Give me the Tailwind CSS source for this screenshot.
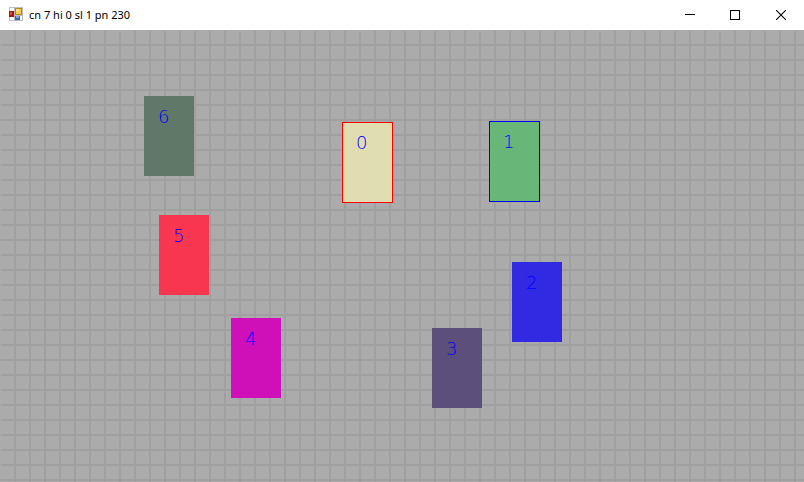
<!DOCTYPE html>
<html lang="en">
<head>
<meta charset="utf-8">
<title>cn 7 hi 0 sl 1 pn 230</title>
<script src="https://cdn.jsdelivr.net/npm/@tailwindcss/browser@4"></script>
</head>
<body class="flex min-h-screen flex-col bg-white">
<header class="flex h-[30px] items-center justify-between pl-2">
  <div class="flex items-center gap-[5px]">
    <svg class="size-4" viewBox="0 0 16 16" shape-rendering="crispEdges" aria-hidden="true">
      <path fill="#bdbdbd" d="M1 0h14v14H1z"/>
      <path fill="#fff" d="M2 1h4v3H2zM2 10h4v3H2zM12 9h2v4h-2z"/>
      <path fill="#a01810" d="M1 4h5v6H1z"/><path fill="#e04a3c" d="M2 5h2v3H2z"/>
      <path fill="#b8860b" d="M7 1h7v7H7z"/><path fill="#f7cf4a" d="M8 2h5v5H8z"/><path fill="#fde58a" d="M8 2h3v2H8z"/>
      <path fill="#3465c0" d="M7 9h5v4H7z"/><path fill="#7fa8f0" d="M8 9h3v2H8z"/>
    </svg>
    <h1 class="font-['Noto_Sans','Open_Sans',sans-serif] text-[11px] leading-4 text-black">cn 7 hi 0 sl 1 pn 230</h1>
  </div>
  <div class="flex h-full">
    <button type="button" aria-label="Minimize" class="flex h-full w-[45px] items-center justify-center"><svg class="size-[10px]" viewBox="0 0 10 10" shape-rendering="crispEdges"><path d="M0 4h10v1H0z"/></svg></button>
    <button type="button" aria-label="Maximize" class="flex h-full w-[46px] items-center justify-center"><svg class="size-[10px]" viewBox="0 0 10 10" shape-rendering="crispEdges"><path fill="none" stroke="#000" d="M.5 .5h9v9h-9z"/></svg></button>
    <button type="button" aria-label="Close" class="flex h-full w-[46px] items-center justify-center"><svg class="size-[10px]" viewBox="0 0 10 10"><path fill="none" stroke="#000" stroke-width="1.1" d="M0 0l10 10M10 0L0 10"/></svg></button>
  </div>
</header>
<main class="relative flex-1 overflow-hidden border-l border-t border-[#ababab] bg-[#ababab] bg-[linear-gradient(to_right,transparent_13px,#a0a0a0_13px),linear-gradient(to_bottom,transparent_13px,#a0a0a0_13px)] bg-[size:15px_15px] font-['DejaVu_Sans_Light','DejaVu_Sans',sans-serif] text-lg leading-6 font-extralight text-[#0000ff]">
  <div class="absolute left-[143px] top-[65px] h-[80px] w-[50px] bg-[#607868] pl-[14px] pt-[9px]">6</div>
  <div class="absolute left-[341px] top-[91px] h-[81px] w-[51px] border border-[#ff0000] bg-[#e0deb0] pl-[13px] pt-[8px]">0</div>
  <div class="absolute left-[488px] top-[90px] h-[81px] w-[51px] border border-[#0000ff] bg-[#68b678] pl-[13px] pt-[8px]">1</div>
  <div class="absolute left-[158px] top-[184px] h-[80px] w-[50px] bg-[#f93650] pl-[14px] pt-[9px]">5</div>
  <div class="absolute left-[511px] top-[231px] h-[80px] w-[50px] bg-[#3229e2] pl-[14px] pt-[9px]">2</div>
  <div class="absolute left-[230px] top-[287px] h-[80px] w-[50px] bg-[#cf10b8] pl-[14px] pt-[9px]">4</div>
  <div class="absolute left-[431px] top-[297px] h-[80px] w-[50px] bg-[#5c4f7c] pl-[14px] pt-[9px]">3</div>
</main>
</body>
</html>
